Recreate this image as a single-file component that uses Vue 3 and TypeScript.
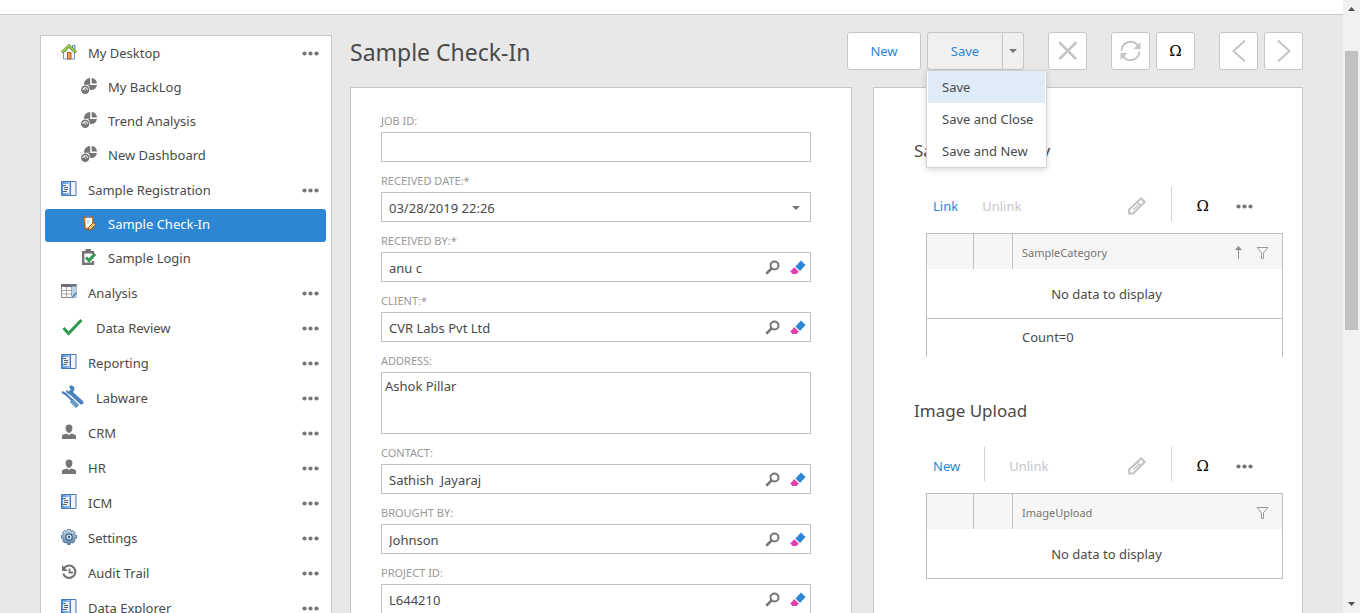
<script setup lang="ts">
import { ref } from 'vue'

interface NavItem {
  label: string
  icon: string
  children?: NavItem[]
}

interface Field {
  id: string
  label: string
  value: string
  kind: 'text' | 'date' | 'lookup' | 'area'
}

interface Section {
  title: string
  action: string
  divided: boolean
  column: string
  sorted: boolean
  footer: string
}

const nav: NavItem[] = [
  {
    label: 'My Desktop',
    icon: 'home',
    children: [
      { label: 'My BackLog', icon: 'dash' },
      { label: 'Trend Analysis', icon: 'dash' },
      { label: 'New Dashboard', icon: 'dash' },
    ],
  },
  {
    label: 'Sample Registration',
    icon: 'book',
    children: [
      { label: 'Sample Check-In', icon: 'clip' },
      { label: 'Sample Login', icon: 'task' },
    ],
  },
  { label: 'Analysis', icon: 'grid' },
  { label: 'Data Review', icon: 'check' },
  { label: 'Reporting', icon: 'book' },
  { label: 'Labware', icon: 'tools' },
  { label: 'CRM', icon: 'person' },
  { label: 'HR', icon: 'person' },
  { label: 'ICM', icon: 'book' },
  { label: 'Settings', icon: 'gear' },
  { label: 'Audit Trail', icon: 'history' },
  { label: 'Data Explorer', icon: 'book' },
]

const selected = ref('Sample Check-In')
const menuOpen = ref(true)
const menu = ['Save', 'Save and Close', 'Save and New']

const fields = ref<Field[]>([
  { id: 'job', label: 'JOB ID:', value: '', kind: 'text' },
  { id: 'date', label: 'RECEIVED DATE:*', value: '03/28/2019 22:26', kind: 'date' },
  { id: 'by', label: 'RECEIVED BY:*', value: 'anu c', kind: 'lookup' },
  { id: 'client', label: 'CLIENT:*', value: 'CVR Labs Pvt Ltd', kind: 'lookup' },
  { id: 'address', label: 'ADDRESS:', value: 'Ashok Pillar', kind: 'area' },
  { id: 'contact', label: 'CONTACT:', value: 'Sathish  Jayaraj', kind: 'lookup' },
  { id: 'brought', label: 'BROUGHT BY:', value: 'Johnson', kind: 'lookup' },
  { id: 'project', label: 'PROJECT ID:', value: 'L644210', kind: 'lookup' },
])

const sections: Section[] = [
  { title: 'Sample Category', action: 'Link', divided: false, column: 'SampleCategory', sorted: true, footer: 'Count=0' },
  { title: 'Image Upload', action: 'New', divided: true, column: 'ImageUpload', sorted: false, footer: '' },
]

const big = (icon: string) => icon === 'check' || icon === 'tools'
</script>

<template>
  <div class="window">
    <svg class="defs" aria-hidden="true">
      <defs>
        <linearGradient id="bookBlue" x1="0" x2="1" y1="0" y2="0">
          <stop offset="0" stop-color="#4f8fdc" />
          <stop offset="1" stop-color="#a9cdf5" />
        </linearGradient>
        <linearGradient id="gearBlue" x1="0" x2="0" y1="0" y2="1">
          <stop offset="0" stop-color="#c6d9e8" />
          <stop offset="1" stop-color="#5f84a5" />
        </linearGradient>
      </defs>
      <symbol id="i-home" viewBox="0 0 16 16">
        <path d="M11.5 1.5h2.5v5h-2.500z" fill="#c9d6ee" stroke="#6f86bd" />
        <path d="M2.500 7.500 8 2.500l5.500 5v7.500h-11z" fill="#f4f7fd" stroke="#7d93c8" />
        <path d="M6.500 8.500h3.500v6.500h-3.500z" fill="#e9a05c" stroke="#b3591b" />
        <path d="M1 8.500 8 2l7 6.500" fill="none" stroke="#4f8a1c" stroke-width="3" />
        <path d="M1.300 8 8 1.800 14.700 8" fill="none" stroke="#b5de5c" stroke-width="1.300" />
      </symbol>
      <symbol id="i-dash" viewBox="0 0 16 16">
        <path d="M9.200 0v6.800H2.900A6.500 6.500 0 0 1 9.200 0z" fill="#757575" />
        <path d="M10.700 0A6 6 0 0 1 16 5.500h-5.300z" fill="#757575" />
        <path d="M16 7a6.200 6.200 0 0 1-6 5H9C9 9.500 8 8 6.800 7z" fill="#757575" />
        <circle cx="4.200" cy="11.800" r="4.200" fill="#757575" />
        <path d="M1.800 12a2.400 2.400 0 0 1 4.800 0" fill="none" stroke="#fff" />
        <path d="M2.800 10 4.500 12.500" stroke="#fff" />
      </symbol>
      <symbol id="i-book" viewBox="0 0 16 16">
        <path d="M.5.5h14.500v14H.5z" fill="#f1f4fb" stroke="#4a78b5" />
        <path d="M1 1h8.500v13H1z" fill="url(#bookBlue)" />
        <path d="M2 3h6v9H2z" fill="#eef3fa" />
        <path d="M2 4.500h3M3 6.500h4M3 8.500h4M2 10.500h4" stroke="#59606c" />
        <path d="M9.500 1v13.500" stroke="#4a78b5" />
      </symbol>
      <symbol id="i-clip" viewBox="0 0 16 16">
        <path d="M2.500 2h9.500v12H4z" fill="#f1a33c" stroke="#a35f18" />
        <path d="M4.500 3h6.500v9.500h-6z" fill="#fafbff" />
        <path d="M5.500 0h3l.5 3h-4z" fill="#7387b8" />
        <path d="M6 6h3M6 8h2" stroke="#b8c0d6" />
        <path d="m7.500 12.500 5-5 2.500 2-5 5-3 1z" fill="#f5c66b" stroke="#7a4a19" />
      </symbol>
      <symbol id="i-task" viewBox="0 0 16 16">
        <path d="M12 5V3.200H2.200v11.500H12V12" fill="none" stroke="#757575" stroke-width="2.400" />
        <path d="M4.500 0h5.500v3h-5.500z" fill="#757575" />
        <path d="m5 8.500 3 3 6-6.500" fill="none" stroke="#2c9b50" stroke-width="3" />
      </symbol>
      <symbol id="i-grid" viewBox="0 0 16 16">
        <path d="M.5.500h14.500v13H.5z" fill="#fff" stroke="#8a8a8a" />
        <path d="M0 0h15.500v3H0z" fill="#6d7076" />
        <path d="M10.500 2.500h4.500v11h-4.500z" fill="#bcd3ec" />
        <path d="M0 6.500h10M0 10h10M5.500 3v10.500M10.500 3v10.500" stroke="#a3a3a3" />
        <path d="m10 15 1-3 4-4.500 1.500 1.500-4 4.500z" fill="#3978b8" stroke="#eef5fc" stroke-width=".6" />
      </symbol>
      <symbol id="i-check" viewBox="0 0 24 24">
        <path d="m2.500 13 5 5.500L20.500 5" fill="none" stroke="#2c9b50" stroke-width="3" />
      </symbol>
      <symbol id="i-tools" viewBox="0 0 24 24">
        <path d="m9.500 7.500 11 10" stroke="#4782bf" stroke-width="4" stroke-linecap="round" />
        <path d="M10.500.3c2.300.7 3.500 3 2.700 5.200L9.500 9.200C6.800 9.300 4.700 7.500 4.800 5l3 1.600 2-2L8 1.400z" fill="#4782bf" />
        <path d="m1 7 3.500 2 7.500 7" fill="none" stroke="#4782bf" stroke-width="2.200" />
        <path d="m10.500 15.500 6 6" stroke="#4782bf" stroke-width="4.400" />
        <path d="m11.500 15 5 5M10.500 17l4.500 4.500" stroke="#c7dbef" stroke-width=".8" />
      </symbol>
      <symbol id="i-person" viewBox="0 0 16 16">
        <path d="M8 .5c2.200 0 3.500 1.400 3.400 3.600C11.300 6.800 9.800 9 8 9S4.700 6.800 4.600 4.100C4.500 1.900 5.800.5 8 .5z" fill="#757575" />
        <path d="M1 15v-3c0-1 1-1.500 4.500-2.500L8 11l2.500-1.500C14 10.500 15 11 15 12v3z" fill="#757575" />
      </symbol>
      <symbol id="i-gear" viewBox="0 0 16 16">
        <path d="m6.500.5 3 0 .5 2 2-1 2 2-.8 2 2.300.8v3l-2.300.7.8 2-2 2-2-.8-.8 2.300h-2.700l-.8-2.300-2 .8-2-2 .8-2L.5 9.300v-3l2-.8-1-2 2-2 2 1z" fill="url(#gearBlue)" stroke="#4d6f90" stroke-width=".8" />
        <circle cx="8" cy="8" r="3.200" fill="#dceaf5" stroke="#355c82" stroke-width="1.200" />
        <circle cx="8" cy="8" r="1.200" fill="#355c82" />
      </symbol>
      <symbol id="i-history" viewBox="0 0 16 16">
        <path d="M3 4.200A6.200 6.200 0 1 1 2.200 9.500" fill="none" stroke="#757575" stroke-width="2.200" />
        <path d="M1 1v6h6z" fill="#757575" />
        <path d="M8.500 4.500v4H12" fill="none" stroke="#757575" stroke-width="1.800" />
      </symbol>
      <symbol id="i-dots" viewBox="0 0 17 5">
        <circle cx="2.500" cy="2.500" r="2.100" />
        <circle cx="8.500" cy="2.500" r="2.100" />
        <circle cx="14.500" cy="2.500" r="2.100" />
      </symbol>
      <symbol id="i-search" viewBox="0 0 15 15">
        <circle cx="9.500" cy="5.500" r="4" fill="none" stroke="#757575" stroke-width="2" />
        <path d="M6.500 8.500 2 13" stroke="#757575" stroke-width="2.500" stroke-linecap="round" />
      </symbol>
      <symbol id="i-erase" viewBox="0 0 16 15">
        <path d="M11 .5 15.500 5 10 11 5.500 6.500z" fill="#2c86d8" />
        <path d="M4.500 7.300 8.800 11.700 6.500 14H2.500L.3 11.300z" fill="#dc3fae" />
      </symbol>
      <symbol id="i-pencil" viewBox="0 0 19 19">
        <path d="M1.200 13.200 13.800 1.500l3.700 3.700L5.500 17.500H1.200z" fill="none" stroke="#c4c4c4" stroke-width="2.200" />
        <path d="m10 5.500 4 4M5.500 13.500l6.500-6" stroke="#c4c4c4" stroke-width="1.400" />
      </symbol>
      <symbol id="i-filter" viewBox="0 0 13 12">
        <path d="M1 .5h11L7.500 5.800v5.700h-2V5.800z" fill="none" stroke="#9c9c9c" />
      </symbol>
      <symbol id="i-up" viewBox="0 0 7 13">
        <path d="M3.500 1v12" stroke="#8c8c8c" />
        <path d="M3.500 0 7 4H0z" fill="#8c8c8c" />
      </symbol>
      <symbol id="i-down" viewBox="0 0 8 4">
        <path d="M0 0h8L4 4z" fill="#757575" />
      </symbol>
      <symbol id="i-x" viewBox="0 0 20 20">
        <path d="m2 2 15.500 15.500M17.500 2 2 17.500" stroke="#c4c4c4" stroke-width="2.500" stroke-linecap="round" />
      </symbol>
      <symbol id="i-refresh" viewBox="0 0 22 22">
        <path d="M1.500 10.500A9 9 0 0 1 18 6" fill="none" stroke="#c4c4c4" stroke-width="2" />
        <path d="M19.500 11.500A9 9 0 0 1 3 16" fill="none" stroke="#c4c4c4" stroke-width="2" />
        <path d="M20.500 2v7h-7zM.5 20v-7h7z" fill="#c4c4c4" />
      </symbol>
      <symbol id="i-prev" viewBox="0 0 14 22">
        <path d="M13 .5 1.500 11 13 21.500" fill="none" stroke="#c4c4c4" stroke-width="2" />
      </symbol>
      <symbol id="i-next" viewBox="0 0 14 22">
        <path d="M1 .5 12.500 11 1 21.500" fill="none" stroke="#c4c4c4" stroke-width="2" />
      </symbol>
    </svg>

    <div class="page">
      <div class="topbar"></div>
      <div class="layout">
        <nav class="sidebar" aria-label="Main navigation">
          <div v-for="item in nav" :key="item.label" class="group">
            <div class="row">
              <a href="#" class="navlink">
                <svg class="ico" :class="{ large: big(item.icon) }"><use :href="'#i-' + item.icon" /></svg>
                <span>{{ item.label }}</span>
              </a>
              <button class="plain dots" :aria-label="item.label + ' options'">
                <svg class="dotsico"><use href="#i-dots" /></svg>
              </button>
            </div>
            <div
              v-for="child in item.children ?? []"
              :key="child.label"
              class="row child"
              :class="{ active: selected === child.label }"
            >
              <a href="#" class="navlink" @click.prevent="selected = child.label">
                <svg class="ico"><use :href="'#i-' + child.icon" /></svg>
                <span>{{ child.label }}</span>
              </a>
            </div>
          </div>
        </nav>

        <main class="main">
          <header class="head">
            <h1>Sample Check-In</h1>
            <div class="actions">
              <div class="cluster">
                <button class="btn new">New</button>
                <div class="split">
                  <button class="btn save">Save</button>
                  <button class="btn arrow" aria-label="Save options" @click="menuOpen = !menuOpen">
                    <svg class="down"><use href="#i-down" /></svg>
                  </button>
                  <div v-if="menuOpen" class="menu" role="menu">
                    <button
                      v-for="(entry, i) in menu"
                      :key="entry"
                      role="menuitem"
                      class="entry"
                      :class="{ hot: i === 0 }"
                    >{{ entry }}</button>
                  </div>
                </div>
              </div>
              <button class="btn square" aria-label="Delete"><svg class="s20"><use href="#i-x" /></svg></button>
              <div class="cluster">
                <button class="btn square" aria-label="Refresh"><svg class="s22"><use href="#i-refresh" /></svg></button>
                <button class="btn square omega">Ω</button>
              </div>
              <div class="cluster">
                <button class="btn square" aria-label="Previous"><svg class="chev"><use href="#i-prev" /></svg></button>
                <button class="btn square" aria-label="Next"><svg class="chev"><use href="#i-next" /></svg></button>
              </div>
            </div>
          </header>

          <div class="panels">
            <form class="panel form" @submit.prevent>
              <div v-for="f in fields" :key="f.id" class="field">
                <label :for="f.id">{{ f.label }}</label>
                <textarea v-if="f.kind === 'area'" :id="f.id" v-model="f.value" spellcheck="false"></textarea>
                <div v-else class="box">
                  <input :id="f.id" v-model="f.value" type="text" spellcheck="false" />
                  <button v-if="f.kind === 'date'" type="button" class="plain pick" aria-label="Choose date">
                    <svg class="down"><use href="#i-down" /></svg>
                  </button>
                  <template v-if="f.kind === 'lookup'">
                    <button type="button" class="plain" aria-label="Search"><svg class="lens"><use href="#i-search" /></svg></button>
                    <button type="button" class="plain" aria-label="Clear"><svg class="eraser"><use href="#i-erase" /></svg></button>
                  </template>
                </div>
              </div>
            </form>

            <div class="panel side">
              <section v-for="s in sections" :key="s.title" class="section">
                <h2>{{ s.title }}</h2>
                <div class="tools">
                  <button class="plain text">{{ s.action }}</button>
                  <span v-if="s.divided" class="sep"></span>
                  <button class="plain text off" disabled>Unlink</button>
                  <div class="right">
                    <button class="plain" aria-label="Edit"><svg class="pencil"><use href="#i-pencil" /></svg></button>
                    <span class="sep"></span>
                    <button class="plain omega">Ω</button>
                    <button class="plain dots more" aria-label="More"><svg class="dotsico"><use href="#i-dots" /></svg></button>
                  </div>
                </div>
                <table :class="{ open: s.footer }">
                  <thead>
                    <tr>
                      <th class="c1"></th>
                      <th class="c2"></th>
                      <th class="c3">
                        <div class="th">
                          <span>{{ s.column }}</span>
                          <svg v-if="s.sorted" class="up"><use href="#i-up" /></svg>
                          <svg class="filter"><use href="#i-filter" /></svg>
                        </div>
                      </th>
                    </tr>
                  </thead>
                  <tbody>
                    <tr><td colspan="3" class="empty">No data to display</td></tr>
                  </tbody>
                  <tfoot v-if="s.footer">
                    <tr>
                      <td></td>
                      <td></td>
                      <td class="count">{{ s.footer }}</td>
                    </tr>
                  </tfoot>
                </table>
              </section>
            </div>
          </div>
        </main>
      </div>
    </div>

    <div class="scroll" aria-hidden="true">
      <svg class="sarrow" viewBox="0 0 17 17"><path d="M5 11h7L8.500 7z" /></svg>
      <div class="track">
        <div class="before"></div>
        <div class="thumb"></div>
        <div class="after"></div>
      </div>
      <svg class="sarrow" viewBox="0 0 17 17"><path d="M5 6h7l-3.500 4z" /></svg>
    </div>
  </div>
</template>

<style>
html,
body {
  margin: 0;
  overflow: hidden;
}
</style>

<style scoped>
* {
  box-sizing: border-box;
}
.window {
  display: flex;
  height: 100vh;
  overflow: hidden;
  background: #e8e8e8;
  color: #4a4a4a;
  font: 13px/18px "Noto Sans", "Open Sans", sans-serif;
}
.defs {
  position: absolute;
  width: 0;
  height: 0;
}
svg {
  display: block;
  flex: none;
}
button,
input,
textarea {
  font: inherit;
  color: inherit;
  margin: 0;
}
button {
  cursor: pointer;
}
.page {
  flex: 1;
  min-width: 0;
}
.topbar {
  height: 15px;
  background: #fff;
  border-bottom: 1px solid #c6c6c6;
}
.layout {
  display: flex;
  align-items: flex-start;
  gap: 18px;
  padding: 0 40px;
}
.sidebar {
  flex: none;
  width: 292px;
  margin-top: 20px;
  padding: 2px 5px 2px 4px;
  background: #fff;
  border: 1px solid #c6c6c6;
}
.group {
  padding-bottom: 1px;
}
.row {
  display: flex;
  align-items: center;
  height: 33px;
  margin-bottom: 1px;
  padding: 0 7px 3px 16px;
  border-radius: 3px;
}
.row.child {
  padding-left: 36px;
}
.row.active {
  background: #2c86d3;
  color: #fff;
}
.navlink {
  display: flex;
  flex: 1;
  align-items: center;
  gap: 11px;
  color: inherit;
  text-decoration: none;
}
.ico {
  width: 16px;
  height: 16px;
  margin-bottom: 2px;
}
.ico.large {
  width: 24px;
  height: 24px;
}
.plain {
  display: flex;
  align-items: center;
  padding: 0;
  border: 0;
  background: none;
}
.dots {
  fill: #757575;
}
.dotsico {
  width: 17px;
  height: 5px;
}
.main {
  flex: 1;
  min-width: 0;
}
.head {
  display: flex;
  align-items: center;
  justify-content: space-between;
  margin: 17px 0;
}
h1 {
  margin: 0;
  padding-top: 2px;
  font-size: 23px;
  line-height: 36px;
  font-weight: 400;
}
.actions {
  display: flex;
  gap: 24px;
}
.cluster {
  display: flex;
  gap: 6px;
}
.btn {
  display: flex;
  align-items: center;
  justify-content: center;
  height: 38px;
  padding: 0;
  border: 1px solid #c6c6c6;
  border-radius: 3px;
  background: #fff;
  color: #2c86d3;
}
.new {
  width: 74px;
}
.split {
  position: relative;
  display: flex;
}
.save {
  width: 75px;
  border-right: 0;
  border-radius: 3px 0 0 3px;
  background: #f0f0f0;
}
.arrow {
  width: 22px;
  border-radius: 0 3px 3px 0;
  background: #f0f0f0;
}
.down {
  width: 8px;
  height: 4px;
}
.square {
  width: 39px;
}
.omega {
  color: #000;
  font: 15px/18px "DejaVu Serif", serif;
}
.s20 {
  width: 20px;
  height: 20px;
}
.s22 {
  width: 22px;
  height: 22px;
}
.chev {
  width: 14px;
  height: 22px;
}
.menu {
  position: absolute;
  z-index: 2;
  top: 100%;
  left: -1px;
  padding: 0 1px;
  border: 1px solid #d3d3d3;
  background: #fff;
  box-shadow: 0 2px 6px rgba(0, 0, 0, 0.15);
}
.entry {
  display: block;
  width: 100%;
  height: 32px;
  padding: 0 12px 0 14px;
  border: 0;
  background: #fff;
  text-align: left;
  white-space: nowrap;
}
.entry.hot {
  background: #dfebf7;
}
.panels {
  display: grid;
  grid-template-columns: minmax(0, 502fr) minmax(0, 430fr);
  gap: 21px;
}
.panel {
  background: #fff;
  border: 1px solid #c6c6c6;
}
.form {
  padding: 24px 40px 24px 30px;
}
.field {
  margin-bottom: 10px;
}
label {
  display: block;
  padding-bottom: 2px;
  color: #999;
  font-size: 11px;
  line-height: 18px;
}
.box {
  display: flex;
  align-items: center;
  gap: 10px;
  height: 30px;
  padding-right: 4px;
  border: 1px solid #c0c0c0;
  background: #fff;
}
.box input {
  flex: 1;
  min-width: 0;
  height: 28px;
  padding: 2px 7px 0;
  border: 0;
  outline: 0;
  background: none;
  white-space: pre;
}
.pick {
  padding: 2px 6px 0;
}
.lens {
  width: 15px;
  height: 15px;
}
.eraser {
  width: 16px;
  height: 15px;
}
textarea {
  display: block;
  width: 100%;
  height: 62px;
  padding: 4px 3px;
  border: 1px solid #c0c0c0;
  border-radius: 0;
  outline: 0;
  resize: none;
}
.side {
  padding: 49px 19px 34px 40px;
}
.section + .section {
  margin-top: 40px;
}
h2 {
  margin: 0 0 22px;
  font-size: 17px;
  line-height: 28px;
  font-weight: 400;
}
.tools {
  display: flex;
  align-items: center;
  height: 34px;
  margin: 0 30px 12px 19px;
  gap: 24px;
}
.tools button {
  padding-top: 4px;
}
.tools .more {
  padding-left: 2px;
}
.text {
  color: #2c86d3;
}
.text.off {
  color: #c6c6c6;
}
.sep {
  width: 1px;
  height: 34px;
  background: #d0d0d0;
}
.right {
  display: flex;
  align-items: center;
  gap: 25px;
  margin-left: auto;
}
.pencil {
  width: 18px;
  height: 18px;
}
table {
  width: calc(100% - 12px);
  margin-left: 12px;
  border: 1px solid #c0c0c0;
  border-spacing: 0;
  table-layout: fixed;
}
table.open {
  border-bottom: 0;
}
th {
  height: 35px;
  padding: 0;
  background: #f6f6f6;
  font-weight: 400;
}
th + th {
  border-left: 1px solid #c0c0c0;
}
.c1 {
  width: 46px;
}
.c2 {
  width: 39px;
}
.th {
  display: flex;
  align-items: center;
  gap: 14px;
  padding: 2px 13px 0 9px;
  color: #757575;
  font-size: 11px;
}
.th span {
  flex: 1;
  text-align: left;
}
.up {
  width: 7px;
  height: 13px;
}
.filter {
  width: 13px;
  height: 12px;
}
td {
  height: 38px;
  padding: 0;
}
.empty {
  height: 49px;
  padding-left: 4px;
  text-align: center;
}
tfoot td {
  border-top: 1px solid #c0c0c0;
  height: 39px;
}
tfoot .count {
  padding: 0 0 2px 10px;
}
.scroll {
  display: flex;
  flex-direction: column;
  flex: none;
  width: 17px;
  background: #f1f1f1;
}
.sarrow {
  width: 17px;
  height: 17px;
  fill: #505050;
}
.track {
  display: flex;
  flex: 1;
  flex-direction: column;
}
.before {
  flex: 34;
}
.thumb {
  flex: 279;
  margin: 0 2px;
  background: #c1c1c1;
}
.after {
  flex: 266;
}
</style>
